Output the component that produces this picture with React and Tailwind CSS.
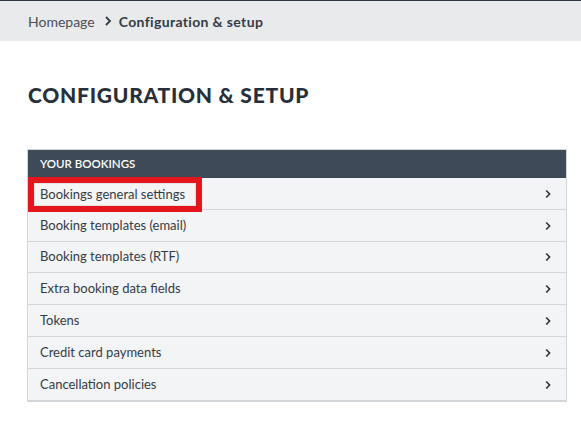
import React from "react";

const rows = [
  ["Bookings general settings", "h-[32px]"],
  ["Booking templates (email)", "h-[32px]"],
  ["Booking templates (RTF)", "h-[31px]"],
  ["Extra booking data fields", "h-[32px]"],
  ["Tokens", "h-[32px]"],
  ["Credit card payments", "h-[32px]"],
  ["Cancellation policies", "h-[31px]"],
];

function Chevron() {
  return (
    <svg width="8" height="10" viewBox="0 0 8 10" className="shrink-0">
      <path d="M2.2 1.5 L5.6 5 L2.2 8.5" fill="none" stroke="#2c3440" strokeWidth="1.6" />
    </svg>
  );
}

export default function App() {
  return (
    <div className="w-[581px] h-[421px] bg-white text-[#333c46] overflow-hidden" style={{ fontFamily: "Lato, 'Open Sans', sans-serif" }}>
      <div className="h-px bg-[#2b3440]" />
      <div className="h-[40px] bg-[#e9eaeb] flex items-center pl-[28px] text-[14px]">
        <span className="text-[#4a4f55]">Homepage</span>
        <svg width="10" height="12" viewBox="0 0 10 12" className="ml-[8px] mr-[6px]">
          <path d="M3 2 L7 6 L3 10" fill="none" stroke="#333c46" strokeWidth="1.8" />
        </svg>
        <span className="font-bold text-[#333c46] tracking-[0.35px]">Configuration &amp; setup</span>
      </div>
      <h1 className="pl-[28px] mt-[42px] text-[21px] font-black tracking-[0.75px] text-[#27303a] leading-[24px]">CONFIGURATION &amp; SETUP</h1>
      <div className="ml-[27px] mr-[14px] mt-[42px] border border-[#d3d6d9] border-b-2">
        <div className="h-[28px] bg-[#3e4a57] flex items-center pl-[12px] text-white text-[11.5px] font-semibold">YOUR BOOKINGS</div>
        {rows.map(([r, h], i) => (
          <div key={r} className={h + " bg-[#f3f4f6] flex items-center justify-between pl-[12px] pr-[14px] text-[13px] " + (i < rows.length - 1 ? "border-b border-[#d3d6d9]" : "")}>
            {i === 0 ? (
              <span className="-ml-[12px] border-[6px] border-[#e4161b] flex items-center h-[35px] -mb-[3px] mt-[-1px]">
                <span className="pl-[5px] pr-[10px] h-full flex items-center bg-[#f5f5f6] border border-[#e2e2e2]">{r}</span>
              </span>
            ) : (
              <span>{r}</span>
            )}
            <Chevron />
          </div>
        ))}
      </div>
    </div>
  );
}
